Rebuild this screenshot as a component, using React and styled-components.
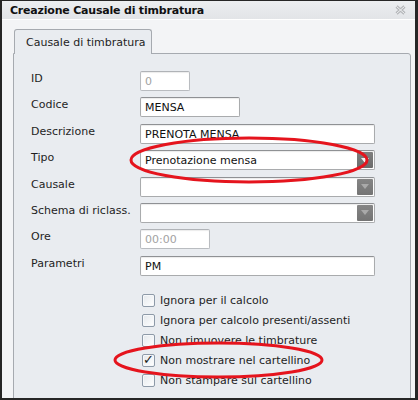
import React from "react";
import styled, { createGlobalStyle } from "styled-components";

const GlobalStyle = createGlobalStyle`
  html, body {
    margin: 0;
    padding: 0;
    background: #ffffff;
  }
  * {
    box-sizing: border-box;
  }
`;

const fields = [
  { label: "ID", value: "0", width: 50, disabled: true },
  { label: "Codice", value: "MENSA", width: 100 },
  { label: "Descrizione", value: "PRENOTA MENSA", width: 235 },
  { label: "Tipo", value: "Prenotazione mensa", width: 235, select: true, active: true },
  { label: "Causale", value: "", width: 235, select: true },
  { label: "Schema di riclass.", value: "", width: 235, select: true },
  { label: "Ore", value: "00:00", width: 70, disabled: true },
  { label: "Parametri", value: "PM", width: 235 }
];

const options = [
  { text: "Ignora per il calcolo", checked: false },
  { text: "Ignora per calcolo presenti/assenti", checked: false },
  { text: "Non rimuovere le timbrature", checked: false },
  { text: "Non mostrare nel cartellino", checked: true },
  { text: "Non stampare sul cartellino", checked: false }
];

// hollow "x" like the disabled close button of the dialog
const CloseIcon = () => (
  <svg width="11" height="10" viewBox="0 0 11 10">
    <path
      d="M1.5 1.5 L9.5 8.5 M9.5 1.5 L1.5 8.5"
      stroke="#b4b6b9"
      strokeWidth="3"
      fill="none"
    />
    <path
      d="M1.5 1.5 L9.5 8.5 M9.5 1.5 L1.5 8.5"
      stroke="#f1f2f4"
      strokeWidth="1"
      fill="none"
    />
  </svg>
);

const Arrow = ({ active }) => (
  <svg width="8" height="5" viewBox="0 0 8 5">
    <path d="M0 0 L8 0 L4 5 Z" fill={active ? "#f2f2f2" : "#a9a9a9"} />
  </svg>
);

const App = () => (
  <>
    <GlobalStyle />
    <Window>
      <TitleBar>
        <Title>Creazione Causale di timbratura</Title>
        <CloseIcon />
      </TitleBar>
      <Body>
        <TabStrip>
          <Tab>Causale di timbratura</Tab>
        </TabStrip>
        <Panel>
          <Form>
            {fields.map((f) => (
              <React.Fragment key={f.label}>
                <Label>{f.label}</Label>
                <Field $width={f.width} $disabled={f.disabled}>
                  <FieldText $disabled={f.disabled}>{f.value}</FieldText>
                  {f.select ? (
                    <DropButton $active={f.active}>
                      <Arrow active={f.active} />
                    </DropButton>
                  ) : null}
                </Field>
              </React.Fragment>
            ))}
          </Form>
          <Checks>
            {options.map((o) => (
              <CheckRow key={o.text}>
                <Box>{o.checked ? <Tick>✓</Tick> : null}</Box>
                <CheckText>{o.text}</CheckText>
              </CheckRow>
            ))}
          </Checks>
        </Panel>
      </Body>
      <Marks width="418" height="400" viewBox="0 0 418 400">
        <ellipse cx="249" cy="160" rx="118" ry="22" />
        <ellipse cx="218.5" cy="360" rx="103.5" ry="17" />
      </Marks>
    </Window>
  </>
);

export default App;

const Window = styled.div`
  position: relative;
  width: 418px;
  height: 400px;
  overflow: hidden;
  background: #f3f4f6;
  border: 2px solid #262626;
  border-top-width: 1px;
  border-right-width: 3px;
  font-family: "DejaVu Sans", Verdana, sans-serif;
  font-size: 11px;
  color: #1e1e1e;
`;

const TitleBar = styled.div`
  display: flex;
  align-items: center;
  justify-content: space-between;
  height: 19px;
  padding: 0 9px 0 8px;
  background: linear-gradient(#eceef0, #e2e4e7);
  border-bottom: 1px solid #ffffff;
`;

const Title = styled.div`
  font-weight: bold;
  font-size: 11px;
  color: #111;
  letter-spacing: -0.2px;
`;

const Body = styled.div`
  padding: 9px 4px 0 11px;
`;

const TabStrip = styled.div`
  display: flex;
  padding-left: 1px;
  margin-bottom: -1px;
  position: relative;
  z-index: 1;
`;

const Tab = styled.div`
  width: 138px;
  height: 25px;
  padding: 6px 0 0 11px;
  background: #e9ecf0;
  border: 1px solid #a6aab0;
  border-bottom: none;
  border-radius: 3px 3px 0 0;
`;

const Panel = styled.div`
  height: 400px;
  background: #e9ecf0;
  border: 1px solid #a6aab0;
  border-radius: 0 3px 0 0;
  padding: 17px 17px 0 17px;
`;

const Form = styled.div`
  display: grid;
  grid-template-columns: 109px 1fr;
  grid-auto-rows: 20px;
  row-gap: 6.4px;
`;

const Label = styled.div`
  padding-top: 1px;
  line-height: 14px;
`;

const Field = styled.div`
  position: relative;
  display: flex;
  align-items: center;
  width: ${(p) => p.$width}px;
  height: 20px;
  background: #ffffff;
  border: 1px solid ${(p) => (p.$disabled ? "#b9bcc0" : "#a9abad")};
  border-top-color: ${(p) => (p.$disabled ? "#b0b3b7" : "#8f9194")};
  border-radius: 2px;
  box-shadow: inset 0 1px 1px rgba(0, 0, 0, 0.08);
  padding: 1px 0 0 4px;
`;

const FieldText = styled.span`
  flex: 1;
  color: ${(p) => (p.$disabled ? "#a2a2a2" : "#111")};
  white-space: nowrap;
`;

const DropButton = styled.div`
  display: flex;
  align-items: center;
  justify-content: center;
  width: 16px;
  height: 16px;
  margin: 0 1px 1px 0;
  border-radius: 1px;
  background: ${(p) =>
    p.$active
      ? "linear-gradient(#7e7e7e, #6c6c6c)"
      : "linear-gradient(#858585, #747474)"};
`;

const Checks = styled.div`
  display: flex;
  flex-direction: column;
  gap: 7px;
  margin: 18px 0 0 111px;
`;

const CheckRow = styled.div`
  display: flex;
  align-items: center;
  gap: 5px;
  height: 13px;
`;

const Box = styled.div`
  position: relative;
  width: 13px;
  height: 13px;
  border: 1px solid #8e9aa8;
  border-radius: 2px;
  background: linear-gradient(135deg, #e4e8ec, #ffffff);
  box-shadow: inset 0 0 0 1px #f6f8fa;
`;

const Tick = styled.span`
  position: absolute;
  left: 0px;
  top: -3px;
  font-size: 13px;
  color: #1a1a1a;
`;

const CheckText = styled.span`
  line-height: 13px;
`;

const Marks = styled.svg`
  position: absolute;
  left: -2px;
  top: -1px;
  pointer-events: none;

  ellipse {
    fill: none;
    stroke: #e5141d;
    stroke-width: 3;
  }
`;
